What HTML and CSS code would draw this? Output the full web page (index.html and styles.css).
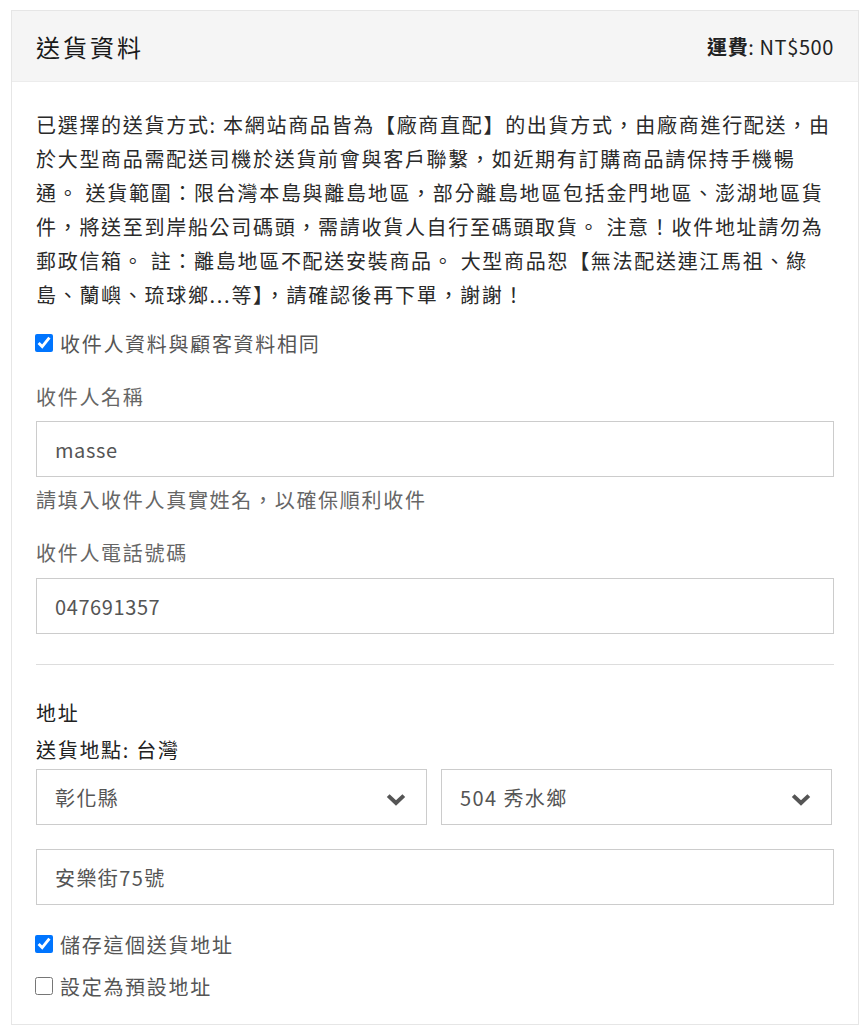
FILE: index.html
```html
<!DOCTYPE html>
<html lang="zh-Hant">
<head>
<meta charset="utf-8">
<title>送貨資料</title>
<link rel="stylesheet" href="styles.css">
</head>
<body>
<section class="card">
  <header class="card-head">
    <h2 class="title">送貨資料</h2>
    <div class="fee"><b>運費</b>: NT$500</div>
  </header>
  <div class="card-body">
    <p class="desc">已選擇的送貨方式: 本網站商品皆為【廠商直配】的出貨方式，由廠商進行配送，由於大型商品需配送司機於送貨前會與客戶聯繫，如近期有訂購商品請保持手機暢通。 送貨範圍：限台灣本島與離島地區，部分離島地區包括金門地區、澎湖地區貨件，將送至到岸船公司碼頭，需請收貨人自行至碼頭取貨。 注意！收件地址請勿為郵政信箱。 註：離島地區不配送安裝商品。 大型商品恕【無法配送連江馬祖、綠島、蘭嶼、琉球鄉...等】，請確認後再下單，謝謝！</p>
    <label class="check-row first"><input type="checkbox" checked><span>收件人資料與顧客資料相同</span></label>

    <div class="label l1">收件人名稱</div>
    <div class="input">masse</div>
    <div class="help">請填入收件人真實姓名，以確保順利收件</div>

    <div class="label l2">收件人電話號碼</div>
    <div class="input">047691357</div>

    <div class="divider"></div>

    <div class="addr-title">地址</div>
    <div class="addr-sub">送貨地點: 台灣</div>
    <div class="selects">
      <div class="select"><span>彰化縣</span><svg class="chev" width="20" height="13" viewBox="0 0 20 13"><polyline points="2.2,2.6 10,10 17.8,2.6" fill="none" stroke="#555" stroke-width="4"/></svg></div>
      <div class="select"><span>504 秀水鄉</span><svg class="chev" width="20" height="13" viewBox="0 0 20 13"><polyline points="2.2,2.6 10,10 17.8,2.6" fill="none" stroke="#555" stroke-width="4"/></svg></div>
    </div>
    <div class="input addr">安樂街75號</div>

    <label class="check-row save"><input type="checkbox" checked><span>儲存這個送貨地址</span></label>
    <label class="check-row def"><input type="checkbox"><span>設定為預設地址</span></label>
  </div>
</section>
</body>
</html>
```

FILE: styles.css
```css
html, body {
  margin: 0;
  padding: 0;
  background: #fff;
}
body {
  font-family: "Noto Sans CJK TC", "Noto Sans", sans-serif;
  font-size: 20px;
  letter-spacing: 1.7px;
  color: #333;
}
.card {
  margin: 10px 9px 0 11px;
  border: 1px solid #e6e6e6;
}
.card-head {
  height: 70px;
  background: #f5f5f5;
  border-bottom: 1px solid #ececec;
  display: flex;
  align-items: center;
  justify-content: space-between;
  padding: 0 24px;
}
.title {
  margin: 0;
  font-size: 24px;
  font-weight: 400;
  letter-spacing: 3px;
  color: #1a1a1a;
}
.fee {
  color: #222;
  letter-spacing: 0.6px;
}
.fee b {
  font-weight: 700;
}
.card-body {
  padding: 26px 24px 23px;
}
.desc {
  margin: 0;
  line-height: 34px;
  color: #2a2a2a;
}
.check-row {
  display: flex;
  align-items: center;
  height: 30px;
  color: #555;
}
.check-row input {
  width: 18px;
  height: 18px;
  margin: 0 7px 0 -1px;
  accent-color: #0075ff;
}
.check-row.first { margin-top: 16px; }
.check-row.save { margin-top: 24px; }
.check-row.def { margin-top: 12px; }
.label {
  line-height: 30px;
  color: #666;
}
.label.l1 { margin-top: 24px; margin-bottom: 9px; }
.label.l2 { margin-top: 23px; margin-bottom: 10px; }
.input, .select {
  box-sizing: border-box;
  height: 56px;
  border: 1px solid #ccc;
  padding: 0 18px;
  display: flex;
  align-items: center;
  color: #555;
  letter-spacing: 0.6px;
}
.input.addr {
  letter-spacing: 1.4px;
  margin-top: 24px;
}
.help {
  margin-top: 8px;
  line-height: 30px;
  color: #666;
}
.divider {
  margin-top: 30px;
  border-top: 1px solid #ddd;
}
.addr-title {
  margin-top: 33px;
  line-height: 30px;
  color: #222;
}
.addr-sub {
  margin-top: 8px;
  line-height: 28px;
  color: #222;
}
.selects {
  margin-top: 5px;
  display: grid;
  grid-template-columns: 1fr 1fr;
  gap: 14px;
  margin-right: 2px;
}
.select {
  justify-content: space-between;
  padding-right: 20px;
  letter-spacing: 1.4px;
}
.chev {
  display: block;
  margin-top: 4px;
}
```
